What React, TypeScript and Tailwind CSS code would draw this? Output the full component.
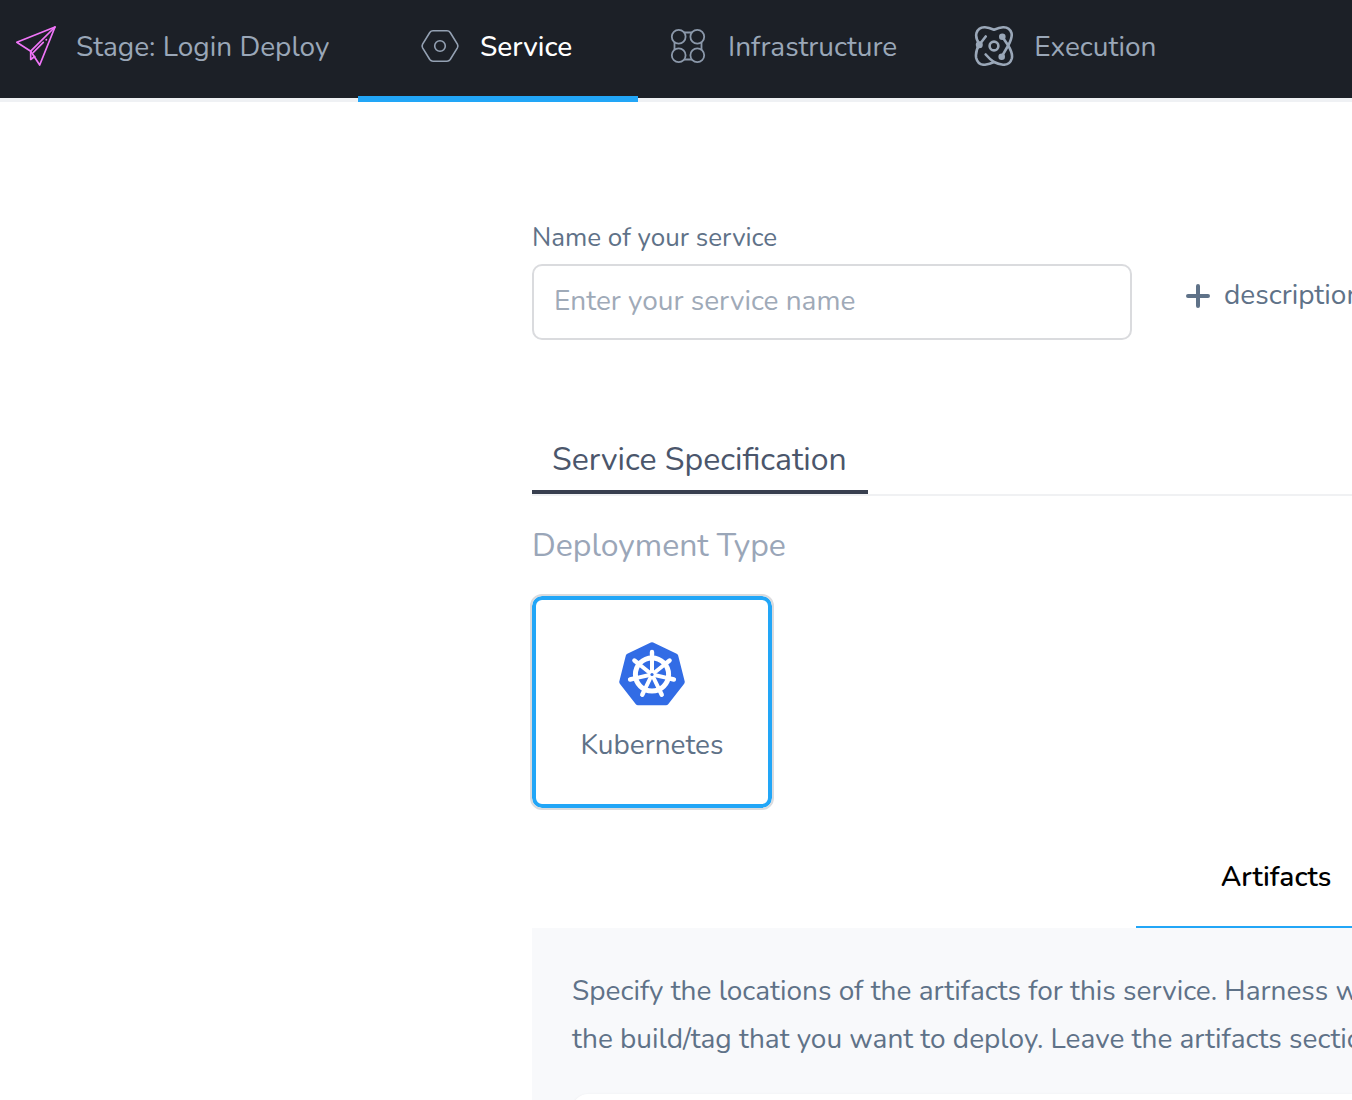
import React from "react";

function PlaneIcon() {
  return (
    <svg className="h-10 w-10 shrink-0" viewBox="0 0 40 40" fill="none" stroke="#f075f8" strokeWidth="1.7" strokeLinejoin="round" strokeLinecap="round" aria-hidden="true">
      <path d="M39 1 .8 16.200l13.900 9L23.700 39Z" />
      <path d="M39 1 14.700 25.200V33.500l4-3" />
      <path d="m17.300 26.500 10-10.200M30.200 13.800l.2-.2" />
    </svg>
  );
}

function ServiceIcon() {
  return (
    <svg className="h-10 w-10 shrink-0" viewBox="0 0 40 40" fill="none" stroke="#94a1b3" strokeWidth="1.6" strokeLinejoin="round" aria-hidden="true">
      <path d="M13 4.700h14q2 0 3.200 1.800l7.200 11.700q1 1.800 0 3.600l-7.200 11.700Q29 35.300 27 35.300H13q-2 0-3.200-1.800L2.600 21.800q-1-1.800 0-3.600L9.800 6.500Q11 4.700 13 4.700Z" />
      <circle cx="20" cy="20" r="5.300" />
    </svg>
  );
}

function InfrastructureIcon() {
  return (
    <svg className="h-10 w-10 shrink-0" viewBox="0 0 40 40" fill="none" stroke="#8b98aa" strokeWidth="1.8" aria-hidden="true">
      <circle cx="10.700" cy="10.700" r="6.900" />
      <circle cx="29.300" cy="10.700" r="6.900" />
      <circle cx="10.700" cy="29.300" r="6.900" />
      <circle cx="29.300" cy="29.300" r="6.900" />
      <path d="M16 6.500h8M16 33.500h8M6.500 16v8M33.500 16v8" />
    </svg>
  );
}

function ExecutionIcon() {
  return (
    <svg className="h-10 w-10 shrink-0" viewBox="0 0 40 40" fill="none" stroke="#9aa7b8" strokeWidth="2.600" strokeLinecap="round" strokeLinejoin="round" aria-hidden="true">
      <path d="M11.700 10.500 5.500 18.500C2.500 23 1.500 28 2.200 32C3.500 37.500 7 39 11 38.700C14.500 38.300 17 37.500 20 36" />
      <path d="M5.500 18.500C2.500 14 1.500 10.500 2.500 7C4 2.500 7.500 1.200 11 1.300C14.500 1.500 17 2.500 20 3.800C23 2.500 25.500 1.500 29 1.300C32.500 1.200 36 2.500 37.500 7C38.500 11 36.700 15 34.200 19.500L27.700 30.700" />
      <path d="M28.300 10.700 34.200 19.500C37.500 25 38.700 29 37.800 32.500C36.500 37 33 38.900 29 38.700C25.500 38.500 23 37.500 20 36Q15.500 33 11.700 28.500" />
      <circle cx="20" cy="20" r="4.400" />
      <g fill="#9aa7b8" stroke="none">
        <circle cx="5.300" cy="18.700" r="3.500" />
        <circle cx="28.300" cy="10.700" r="3.300" />
        <circle cx="27.700" cy="30.700" r="3.300" />
      </g>
    </svg>
  );
}

const SPOKES = [0, 1, 2, 3, 4, 5, 6].map((n) => (n * 360) / 7);

function KubernetesLogo() {
  return (
    <svg className="h-16 w-[66px]" viewBox="0 0 66 64" aria-hidden="true">
      <path
        d="M33 3 56.500 14.200 63 40 47 60.500h-28L3 40 9.500 14.200Z"
        fill="#326ce5"
        stroke="#326ce5"
        strokeWidth="5.500"
        strokeLinejoin="round"
      />
      <g fill="none" stroke="#fff" strokeLinecap="round">
        <circle cx="33" cy="32.500" r="16.600" strokeWidth="5" />
        {SPOKES.map((angle) => (
          <g key={angle} transform={`rotate(${angle} 33 32.500)`}>
            <path d="M33 30V16" strokeWidth="4" />
            <path d="M33 16V10" strokeWidth="4.400" />
          </g>
        ))}
      </g>
      <circle cx="33" cy="32.500" r="1.600" fill="#326ce5" />
    </svg>
  );
}

export default function App() {
  return (
    <div className="min-h-screen overflow-hidden bg-white font-['Nunito','Lato',sans-serif] text-[28px] text-[#5f7288]">
      <header className="flex h-[102px] whitespace-nowrap border-b-4 border-[#eff1f4] bg-[#1c2027] text-[#9aa7b8]">
        <div className="flex h-23 w-[358px] shrink-0 items-center gap-5 pl-4">
          <PlaneIcon />
          <span className="pt-0.5">Stage: Login Deploy</span>
        </div>
        <nav className="flex">
          <button className="flex h-[102px] w-70 items-center gap-5 border-b-6 border-[#22a6f7] pb-1 pl-[62px] font-medium text-white">
            <ServiceIcon />
            <span className="pt-0.5">Service</span>
          </button>
          <button className="flex h-23 items-center gap-5 pr-[37px] pl-[30px]">
            <InfrastructureIcon />
            <span className="pt-0.5">Infrastructure</span>
          </button>
          <button className="flex h-23 items-center gap-5 px-10">
            <ExecutionIcon />
            <span className="pt-0.5">Execution</span>
          </button>
        </nav>
      </header>

      <main className="pt-30 pl-[532px]">
        <div className="flex items-end whitespace-nowrap">
          <div className="flex w-150 shrink-0 flex-col gap-2">
            <label htmlFor="service-name" className="pb-0.5 text-[26px] leading-8">
              Name of your service
            </label>
            <input
              id="service-name"
              placeholder="Enter your service name"
              className="h-19 w-full rounded-[10px] border-2 border-[#dadbde] px-5 pb-0.5 placeholder:text-[#9faab8]"
            />
          </div>
          <button className="mb-[23px] ml-[54px] flex items-center gap-3.5 leading-10">
            <svg className="h-6 w-6" viewBox="0 0 24 24" stroke="currentColor" strokeWidth="4" strokeLinecap="round" aria-hidden="true">
              <path d="M2 12h20M12 2v20" />
            </svg>
            <span className="pb-0.5">description</span>
          </button>
        </div>

        <div className="mt-22 border-b-2 border-[#f0f1f3]">
          <h2 className="w-84 border-b-4 border-[#383f4f] px-5 pt-1.5 pb-1 text-[32px] leading-[52px] text-[#4b566b]">
            Service Specification
          </h2>
        </div>

        <h3 className="mt-7 text-[32px] leading-11 text-[#9aa6b8]">Deployment Type</h3>
        <button className="mt-7 flex h-53 w-60 flex-col items-center rounded-[10px] border-4 border-[#22a6f7] pt-[42px] outline-2 outline-[#dadbde]">
          <KubernetesLogo />
          <span className="mt-[19px] leading-10">Kubernetes</span>
        </button>

        <div className="mt-7 pl-[604px]">
          <button className="h-23 w-70 border-b-2 border-[#22a6f7] pb-2 font-semibold text-black">Artifacts</button>
        </div>
        <section className="overflow-hidden bg-[#f8f9fb] pt-[39px] pl-10">
          <p className="leading-12 whitespace-nowrap">
            Specify the locations of the artifacts for this service. Harness w
            <br />
            the build/tag that you want to deploy. Leave the artifacts sectio
          </p>
          <div className="mt-[31px] h-20 rounded-tl-2xl bg-white shadow-sm" />
        </section>
      </main>
    </div>
  );
}
